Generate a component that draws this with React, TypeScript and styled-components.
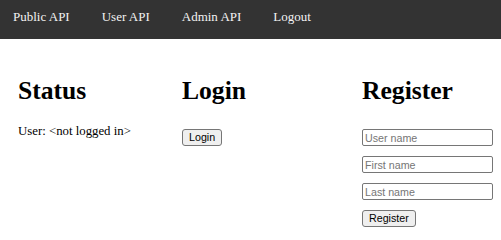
import React from 'react';
import styled, { createGlobalStyle } from 'styled-components';

const GlobalStyle = createGlobalStyle`
  html, body {
    margin: 0;
    padding: 0;
    background: #fff;
  }
  body {
    font-family: "Liberation Serif", "Times New Roman", serif;
    font-size: 12.8px;
    color: #000;
  }
`;

const NavBar = styled.nav`
  display: flex;
  gap: 32px;
  height: 39px;
  padding-left: 13px;
  background: #333;
  box-sizing: border-box;
`;

const NavLink = styled.a`
  padding-top: 9px;
  color: #f2f2f2;
  font-size: 13px;
  line-height: 15px;
  text-decoration: none;
  cursor: pointer;
`;

const Main = styled.main`
  display: grid;
  grid-template-columns: 164px 180px 1fr;
  padding: 38px 0 0 18px;
`;

const Column = styled.section`
  display: flex;
  flex-direction: column;
  align-items: flex-start;
`;

const Heading = styled.h1`
  margin: 0;
  font-size: 25.6px;
  line-height: 28px;
  font-weight: bold;
`;

const StatusText = styled.p`
  margin: 19px 0 0;
  line-height: 15px;
`;

const Form = styled.div`
  display: flex;
  flex-direction: column;
  align-items: flex-start;
  gap: 10px;
  margin-top: 24px;
`;

const Field = styled.input`
  box-sizing: border-box;
  width: 131px;
  height: 17px;
  padding: 0 2px;
  border: 1px solid #767676;
  border-radius: 2px;
  font-family: "Liberation Sans", Arial, sans-serif;
  font-size: 10.7px;
  color: #000;
  background: #fff;
  outline: none;

  &::placeholder {
    color: #757575;
  }
`;

const Button = styled.button`
  box-sizing: border-box;
  height: 17px;
  padding: 0 6px;
  border: 1px solid #767676;
  border-radius: 3px;
  background: #efefef;
  font-family: "Liberation Sans", Arial, sans-serif;
  font-size: 10.7px;
  line-height: 15px;
  color: #000;
  cursor: pointer;
`;

const links = ['Public API', 'User API', 'Admin API', 'Logout'];

const App = () => (
  <>
    <GlobalStyle />
    <NavBar>
      {links.map((l) => (
        <NavLink key={l}>{l}</NavLink>
      ))}
    </NavBar>
    <Main>
      <Column>
        <Heading>Status</Heading>
        <StatusText>User: &lt;not logged in&gt;</StatusText>
      </Column>
      <Column>
        <Heading>Login</Heading>
        <Form>
          <Button>Login</Button>
        </Form>
      </Column>
      <Column>
        <Heading>Register</Heading>
        <Form>
          <Field placeholder="User name" />
          <Field placeholder="First name" />
          <Field placeholder="Last name" />
          <Button>Register</Button>
        </Form>
      </Column>
    </Main>
  </>
);

export default App;
